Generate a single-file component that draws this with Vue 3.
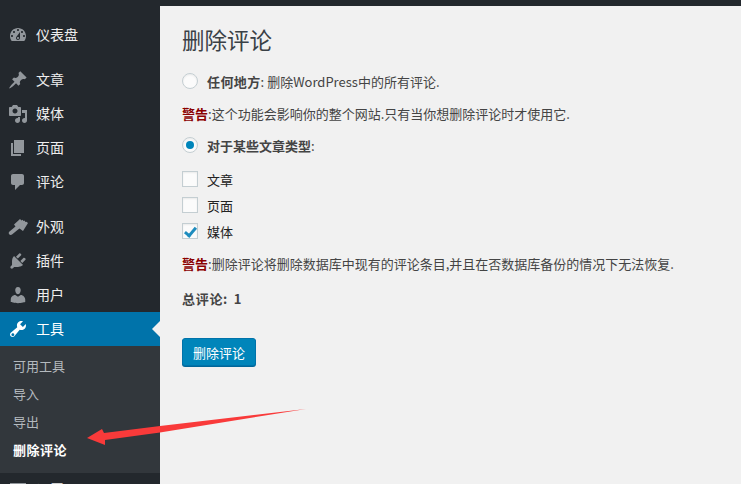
<script setup>
const menuA = [
  { label: '仪表盘', d: 'M3.76 16h12.48c1.1-1.37 1.76-3.11 1.76-5 0-4.42-3.58-8-8-8s-8 3.58-8 8c0 1.89.66 3.63 1.76 5zM10 4c.55 0 1 .45 1 1s-.45 1-1 1-1-.45-1-1 .45-1 1-1zM6 6c.55 0 1 .45 1 1s-.45 1-1 1-1-.45-1-1 .45-1 1-1zm8 0c.55 0 1 .45 1 1s-.45 1-1 1-1-.45-1-1 .45-1 1-1zm-5.370 5.550L12 7v6c0 1.100-.9 2-2 2s-2-.9-2-2c0-.57.24-1.080.63-1.450zM4 10c.55 0 1 .45 1 1s-.45 1-1 1-1-.45-1-1 .45-1 1-1zm12 0c.55 0 1 .45 1 1s-.45 1-1 1-1-.45-1-1 .45-1 1-1zm-5 3c0-.55-.45-1-1-1s-1 .45-1 1 .45 1 1 1 1-.45 1-1z' }
]
const menuB = [
  { label: '文章', d: 'M10.44 3.02l1.82-1.82 6.36 6.35-1.83 1.82c-1.05-.68-2.48-.57-3.41.36l-.75.75c-.92.93-1.04 2.35-.35 3.41l-1.83 1.82-2.41-2.41-2.8 2.79c-.42.42-3.38 2.71-3.8 2.29s1.86-3.39 2.28-3.81l2.79-2.79L4.1 9.36l1.83-1.82c1.05.69 2.48.57 3.4-.36l.75-.75c.93-.92 1.05-2.35.36-3.41z' },
  { label: '媒体', d: 'M13 11V4c0-.55-.45-1-1-1h-1.67L9 1H5L3.67 3H2c-.55 0-1 .45-1 1v7c0 .55.45 1 1 1h10c.55 0 1-.45 1-1zM7 4.500c1.380 0 2.500 1.120 2.500 2.500S8.380 9.500 7 9.500 4.500 8.380 4.500 7 5.620 4.500 7 4.500zM14 6h5v10.500c0 1.380-1.120 2.500-2.500 2.500S14 17.880 14 16.500s1.120-2.500 2.500-2.500c.17 0 .34.020.5.050V9h-3V6zm-4 8.050V13h2v3.500c0 1.380-1.120 2.500-2.500 2.500S7 17.880 7 16.500 8.120 14 9.500 14c.17 0 .34.020.5.050z' },
  { label: '页面', d: 'M6 15V2h10v13H6zm-1 1h8v2H3V5h2v11z' },
  { label: '评论', d: 'M5 2h9c1.100 0 2 .9 2 2v7c0 1.100-.9 2-2 2h-2l-5 5v-5H5c-1.100 0-2-.9-2-2V4c0-1.100.9-2 2-2z' }
]
const menuC = [
  { label: '外观', d: 'M12 2L13.500 3.500L14.500 2.800L15.500 4L16.500 3.500L17.500 5L18.500 4.800L20 6L15 14L11.500 11.500L9.500 13L4 17.500C3 18.300 1.500 17.800 1 17C.5 16.200 .7 15.200 1.500 14.500L7.500 9.500L6 7.500Z' },
  { label: '插件', d: 'M13.110 4.360L9.870 7.600 8 5.730l3.240-3.240c.35-.34 1.050-.2 1.560.32.520.51.660 1.210.31 1.550zm-8 1.770l.91-1.120 9.010 9.010-1.190.84c-.71.710-2.630 1.160-3.820 1.160H6.140L4.900 17.260c-.59.590-1.540.59-2.120 0-.59-.58-.59-1.530 0-2.120l1.240-1.240v-3.880c0-1.130.4-3.190 1.090-3.890zm7.260 3.970l3.240-3.240c.34-.35 1.040-.21 1.550.31.520.51.660 1.210.31 1.550l-3.240 3.250z' },
  { label: '用户', d: 'M10 9.250c-2.270 0-2.730-3.440-2.730-3.440C7 4.020 7.820 2 9.960 2c2.160 0 2.980 2.020 2.710 3.810 0 0-.41 3.440-2.670 3.440zm0 2.570L12.720 10c2.390 0 4.520 2.330 4.520 4.530v2.490s-3.650 1.130-7.240 1.130c-3.650 0-7.240-1.130-7.240-1.130v-2.490c0-2.250 1.940-4.500 4.470-4.500z' }
]
const tools = 'M16.680 9.770c-1.340 1.340-3.300 1.670-4.950.99l-5.410 6.520c-.99.990-2.590.99-3.570 0-.99-.98-.99-2.580 0-3.570l6.520-5.420c-.68-1.650-.35-3.610.99-4.950 1.280-1.280 3.120-1.620 4.720-1.060l-2.890 2.890 2.820 2.820 2.860-2.870c.53 1.580.18 3.400-1.090 4.670zM4.860 17.200c.79 0 1.430-.64 1.430-1.430s-.64-1.430-1.430-1.430-1.430.64-1.430 1.430.64 1.430 1.430 1.430z'
const settings = 'M2 3h16v12H2z M4 5v8h12V5z'
const submenu = ['可用工具', '导入', '导出', '删除评论']
const types = [
  { label: '文章', checked: false },
  { label: '页面', checked: false },
  { label: '媒体', checked: true }
]
</script>

<template>
  <div class="page">
    <div class="topbar"></div>
    <div class="body">
      <aside class="side">
        <nav class="group first">
          <a v-for="m in menuA" :key="m.label" class="item">
            <svg class="ico" viewBox="0 0 20 20"><path :d="m.d" fill-rule="evenodd" /></svg><span class="lbl">{{ m.label }}</span>
          </a>
        </nav>
        <nav class="group">
          <a v-for="m in menuB" :key="m.label" class="item">
            <svg class="ico" viewBox="0 0 20 20"><path :d="m.d" fill-rule="evenodd" /></svg><span class="lbl">{{ m.label }}</span>
          </a>
        </nav>
        <nav class="group">
          <a v-for="m in menuC" :key="m.label" class="item">
            <svg class="ico" viewBox="0 0 20 20"><path :d="m.d" fill-rule="evenodd" /></svg><span class="lbl">{{ m.label }}</span>
          </a>
          <a class="item active">
            <svg class="ico" viewBox="0 0 20 20"><path :d="tools" fill-rule="evenodd" /></svg><span class="lbl">工具</span>
          </a>
          <ul class="sub">
            <li v-for="(s, i) in submenu" :key="s" :class="{ cur: i === 3 }">{{ s }}</li>
          </ul>
          <a class="item tail">
            <svg class="ico" viewBox="0 0 20 20"><path :d="settings" fill-rule="evenodd" /></svg><span class="lbl">设置</span>
          </a>
        </nav>
      </aside>
      <main class="main">
        <h1>删除评论</h1>
        <label class="row radio-row">
          <input type="radio" name="scope" />
          <span><b class="wide">任何地方</b>: 删除WordPress中的所有评论.</span>
        </label>
        <p class="warn"><b>警告</b>:这个功能会影响你的整个网站.只有当你想删除评论时才使用它.</p>
        <label class="row radio-row second">
          <input type="radio" name="scope" checked />
          <span><b>对于某些文章类型</b>:</span>
        </label>
        <div class="checks">
          <label v-for="t in types" :key="t.label" class="row check">
            <input type="checkbox" :checked="t.checked" />
            <span>{{ t.label }}</span>
          </label>
        </div>
        <p class="warn low"><b>警告</b>:删除评论将删除数据库中现有的评论条目,并且在否数据库备份的情况下无法恢复.</p>
        <p class="total"><b>总评论: 1</b></p>
        <button class="btn" type="button">删除评论</button>
      </main>
    </div>
    <svg class="arrow" width="741" height="484" viewBox="0 0 741 484">
      <path d="M87 438L102 429L104 433L160 426L306 409L160 432.500L105 440L105 445Z" fill="#f93a3a" />
    </svg>
  </div>
</template>

<style>
html, body { margin: 0; background: #f1f1f1; }
</style>

<style scoped>
.page {
  position: relative;
  width: 741px;
  height: 484px;
  overflow: hidden;
  font-family: "Noto Sans CJK SC", "Liberation Sans", sans-serif;
  font-size: 13px;
  color: #444;
  background: #f1f1f1;
}
.topbar { height: 6px; background: #23282d; }
.body { display: flex; height: 478px; }
.side { width: 160px; flex: none; background: #23282d; }
.group { padding-bottom: 11px; }
.group.first { padding-top: 12px; }
.item {
  display: flex;
  align-items: center;
  height: 34px;
  color: #eee;
  font-size: 14px;
  position: relative;
}
.lbl { margin-top: -2px; }
.tail { align-items: flex-start; padding-top: 7px; }
.tail .lbl { margin-top: -1px; }
.ico { width: 20px; height: 20px; margin: 0 8px; fill: #92979c; flex: none; }
.active { background: #0073aa; color: #fff; }
.active .ico { fill: #fff; }
.active::after {
  content: "";
  position: absolute;
  right: 0;
  top: 50%;
  margin-top: -8px;
  border: 8px solid transparent;
  border-right-color: #f1f1f1;
  border-left-width: 0;
}
.sub {
  list-style: none;
  margin: 0;
  padding: 7px 0 8px;
  background: #32373c;
  color: #b4b9be;
  font-size: 13px;
}
.sub li { height: 28px; line-height: 26px; padding-left: 13px; }
.sub .cur { color: #fff; font-weight: 700; letter-spacing: .5px; }
.main { flex: 1; padding: 0 0 0 22px; min-width: 0; }
h1 {
  margin: 17px 0 0;
  font-size: 22.500px;
  line-height: 32px;
  font-weight: 400;
  color: #3a4046;
}
.row { display: flex; align-items: center; }
.row input {
  appearance: none;
  width: 16px;
  height: 16px;
  margin: 0 9px 0 0;
  flex: none;
  background: #fbfbfb;
  border: 1px solid #c4ced2;
  box-shadow: inset 0 1px 2px rgba(0, 0, 0, .07);
  position: relative;
}
.row input[type="radio"] { border-radius: 50%; }
.row input[type="radio"]:checked::before {
  content: "";
  position: absolute;
  left: 3px;
  top: 3px;
  width: 8px;
  height: 8px;
  border-radius: 50%;
  background: #0085ba;
}
.row input[type="checkbox"]:checked::before {
  content: "";
  position: absolute;
  left: 4px;
  top: 1px;
  width: 4px;
  height: 9px;
  border: solid #1e8cbe;
  border-width: 0 3px 3px 0;
  transform: rotate(40deg);
}
.radio-row { height: 20px; margin-top: 16px; }
.radio-row.second { margin-top: 11px; }
.warn { margin: 13px 0 0; line-height: 20px; font-size: 13px; }
.warn b { color: #8b0000; }
.checks { margin-top: 14px; display: flex; flex-direction: column; gap: 6px; }
.check { height: 20px; color: #222; }
.wide { letter-spacing: .4px; }
.warn.low { margin-top: 13px; }
.total { margin: 15px 0 0; line-height: 20px; letter-spacing: .7px; word-spacing: 2px; }
.btn {
  display: block;
  margin-top: 29px;
  width: 74px;
  height: 28px;
  padding: 0;
  background: #0085ba;
  border: 1px solid #0073aa;
  border-radius: 3px;
  box-shadow: 0 1px 0 #006799;
  color: #fff;
  font: inherit;
  font-size: 13px;
}
.arrow { position: absolute; left: 0; top: 0; pointer-events: none; }
</style>
